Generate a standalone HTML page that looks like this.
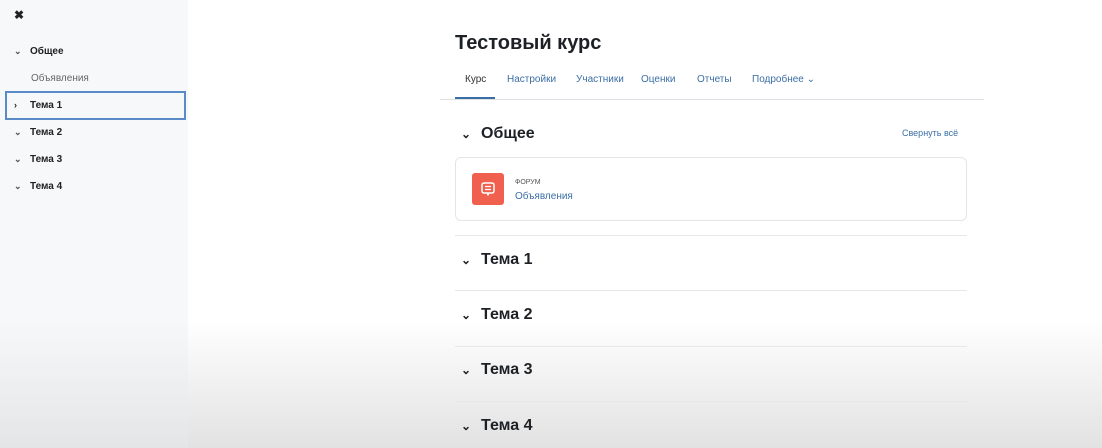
<!DOCTYPE html>
<html><head><meta charset="utf-8"><style>
*{margin:0;padding:0;box-sizing:border-box}
body{width:1102px;height:448px;overflow:hidden;font-family:"Liberation Sans","Noto Sans CJK SC",sans-serif;background:#fff;position:relative}
.fade{position:absolute;left:0;top:320px;width:1102px;height:128px;background:linear-gradient(rgba(232,232,232,0),rgba(226,226,226,1))}
.side{position:absolute;left:0;top:0;width:188px;height:448px;background:linear-gradient(#f7f8fa 0,#f7f8fa 320px,#e4e5e6 448px)}
.x{position:absolute;left:14px;top:8px;font-size:12px;font-weight:bold;color:#222}
.si{position:absolute;left:14px;font-size:10px;color:#222;font-weight:bold}
.si .c{display:inline-block;width:16px;color:#555;font-size:9px}
.sel{position:absolute;left:5px;top:91px;width:181px;height:29px;border:2px solid #5b8bc6}
h1{position:absolute;left:455px;top:32px;font-size:20px;font-weight:bold;color:#1d2125}
.tabs{position:absolute;left:455px;top:74px;font-size:10px;color:#3b6ea5}
.tabs span{position:absolute;white-space:nowrap}
.ul{position:absolute;left:455px;top:97px;width:40px;height:2px;background:#3b6ea5}
.hr{position:absolute;left:440px;top:99px;width:544px;height:1px;background:#dee2e6}
.sec{position:absolute;left:461px;font-size:16px;font-weight:bold;color:#1d2125}
.sec b{display:inline-block;width:20px;font-size:12px}
.line{position:absolute;left:455px;width:512px;height:1px;background:#e5e7ea}
.card{position:absolute;left:455px;top:157px;width:512px;height:64px;border:1px solid #e3e5e8;border-radius:6px;background:#fff}
.ic{position:absolute;left:16px;top:15px;width:32px;height:32px;background:#f0604e;border-radius:3px}
</style></head><body>
<div class="fade"></div>
<div class="side">
<div class="x">✖</div>
<div class="si" style="top:46px"><span class="c">⌄</span>Общее</div>
<div class="si" style="top:73px;left:31px;font-weight:normal;color:#666">Объявления</div>
<div class="sel"></div>
<div class="si" style="top:100px"><span class="c" style="color:#222">›</span>Тема 1</div>
<div class="si" style="top:127px"><span class="c">⌄</span>Тема 2</div>
<div class="si" style="top:154px"><span class="c">⌄</span>Тема 3</div>
<div class="si" style="top:181px"><span class="c">⌄</span>Тема 4</div>
</div>
<h1>Тестовый курс</h1>
<div class="tabs">
<span style="left:10px;color:#333">Курс</span><span style="left:52px">Настройки</span><span style="left:121px">Участники</span><span style="left:186px">Оценки</span><span style="left:242px">Отчеты</span><span style="left:297px">Подробнее ⌄</span>
</div>
<div class="ul"></div><div class="hr"></div>
<div class="sec" style="top:125px"><b>⌄</b>Общее</div>
<div style="position:absolute;left:902px;top:128px;font-size:9px;color:#3b6ea5">Свернуть всё</div>
<div class="card"><div class="ic"><svg width="32" height="32" viewBox="0 0 32 32"><rect x="10" y="10" width="12" height="10" rx="2" fill="none" stroke="#fff" stroke-width="1.5"/><path d="M13 13.5h6M13 16.5h6M15 20l1 2 1-2" stroke="#fff" stroke-width="1.2" fill="none"/></svg></div>
<div style="position:absolute;left:59px;top:21px;font-size:7px;color:#555">ФОРУМ</div>
<div style="position:absolute;left:59px;top:33px;font-size:10px;color:#3b6ea5">Объявления</div></div>
<div class="line" style="top:235px"></div>
<div class="sec" style="top:251px"><b>⌄</b>Тема 1</div>
<div class="line" style="top:290px"></div>
<div class="sec" style="top:306px"><b>⌄</b>Тема 2</div>
<div class="line" style="top:346px"></div>
<div class="sec" style="top:361px"><b>⌄</b>Тема 3</div>
<div class="line" style="top:401px"></div>
<div class="sec" style="top:417px"><b>⌄</b>Тема 4</div>
</body></html>
